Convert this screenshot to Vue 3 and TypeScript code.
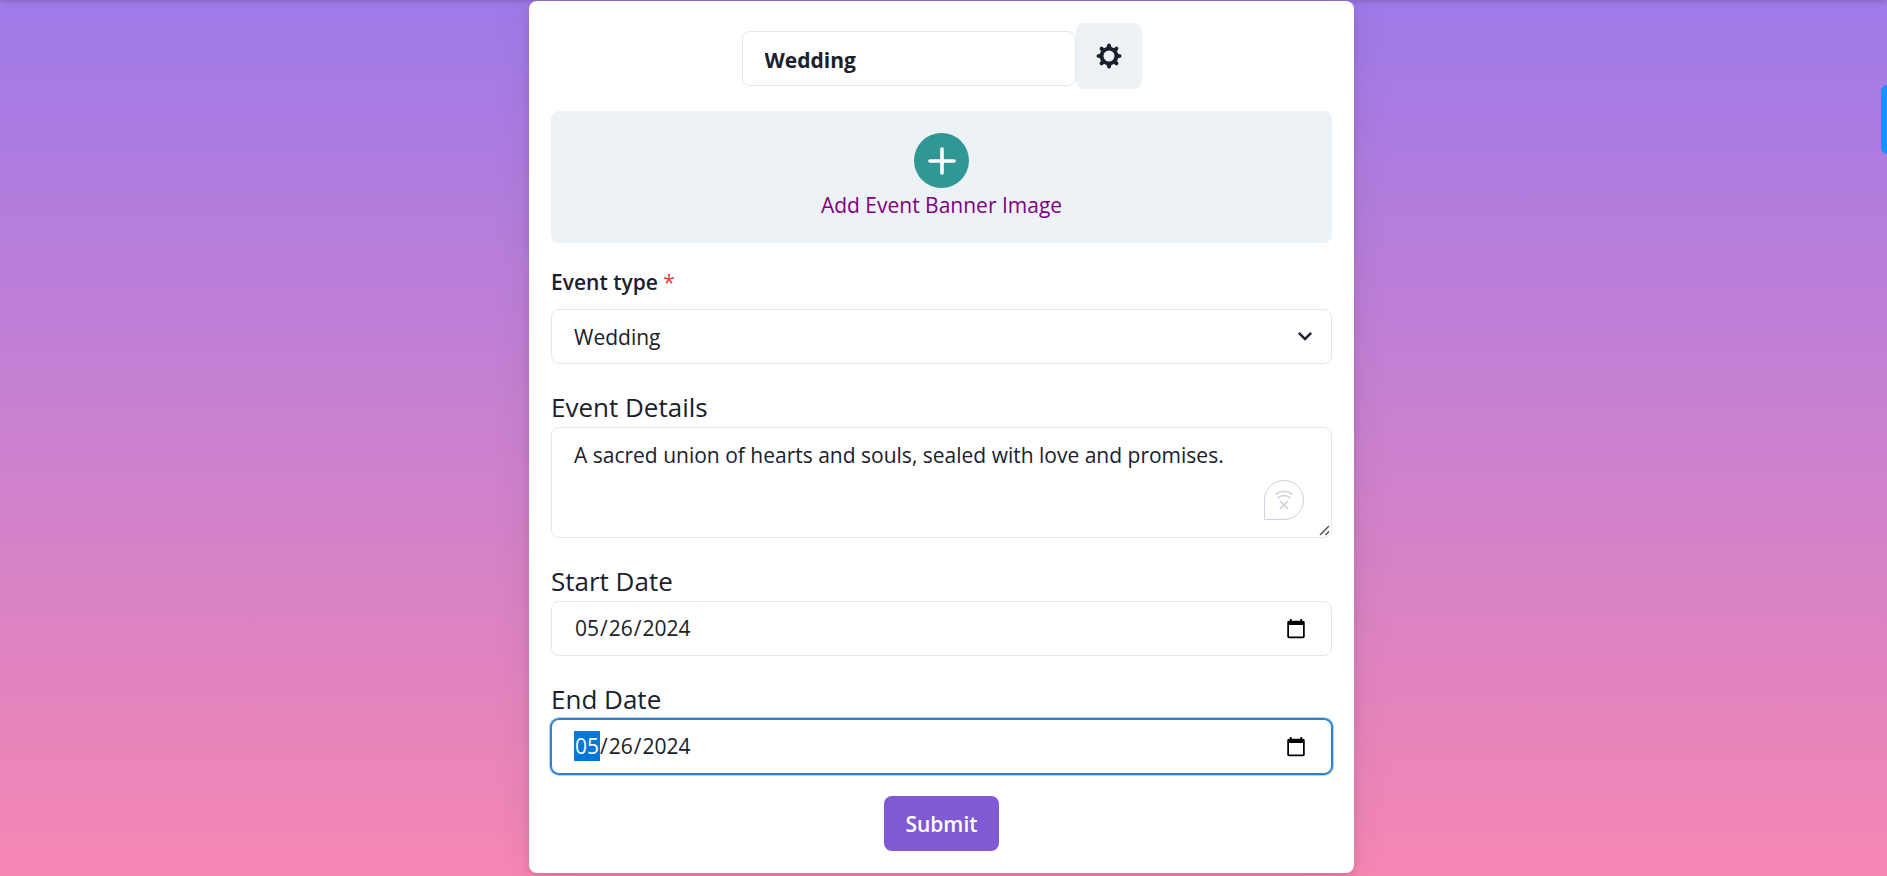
<script setup lang="ts">
import { onMounted, ref } from 'vue'

const title = ref('Wedding')
const eventType = ref('Wedding')
const details = ref('A sacred union of hearts and souls, sealed with love and promises.')
const startDate = ref('2024-05-26')
const endDate = ref('2024-05-26')
const endInput = ref<HTMLInputElement | null>(null)
const eventTypes: string[] = ['Wedding', 'Birthday', 'Conference']

onMounted(() => endInput.value?.focus())
</script>

<template>
  <main class="page">
    <form class="card" @submit.prevent>
      <div class="title-row">
        <input v-model="title" class="field title" type="text" aria-label="Event title" />
        <button class="settings" type="button" aria-label="Settings">
          <svg viewBox="0 0 28 28" width="28" height="28" aria-hidden="true">
            <g fill="currentColor">
              <path v-for="n in 8" :key="n" :transform="`rotate(${n * 45} 14 14)`" d="M10.400 6.500Q12 5.500 12.200 3Q12.300 1.500 14 1.500T15.800 3Q16 5.500 17.600 6.500Z" />
            </g>
            <circle cx="14" cy="14" r="7.400" fill="none" stroke="currentColor" stroke-width="3.800" />
          </svg>
        </button>
      </div>

      <button class="banner" type="button">
        <span class="plus">
          <svg viewBox="0 0 28 28" width="28" height="28" aria-hidden="true">
            <path d="M14 2v24M2 14h24" stroke="currentColor" stroke-width="3.600" stroke-linecap="round" />
          </svg>
        </span>
        <span>Add Event Banner Image</span>
      </button>

      <div class="group spaced">
        <label class="type-label" for="type">Event type <span class="required">*</span></label>
        <div class="select-wrap">
          <select id="type" v-model="eventType" class="field">
            <option v-for="t in eventTypes" :key="t">{{ t }}</option>
          </select>
          <svg class="chevron" viewBox="0 0 24 24" width="28" height="28" aria-hidden="true">
            <path d="M16.59 8.59L12 13.17 7.41 8.59 6 10l6 6 6-6z" fill="currentColor" />
          </svg>
        </div>
      </div>

      <div class="group">
        <label class="label" for="details">Event Details</label>
        <div class="area-wrap">
          <textarea id="details" v-model="details" class="field" spellcheck="false"></textarea>
          <svg class="offline" viewBox="0 0 42 42" width="42" height="42" fill="none" aria-hidden="true">
            <path d="M1.500 40.500V21A19.500 19.500 0 1 1 21 40.500Z" fill="#fff" stroke="#cdd2e0" />
            <g stroke="#d2d2d2" stroke-width="1.700">
              <path d="M12.500 15.500Q21 9 29.500 15.500M14.500 19Q21 14 27.500 19M17 22l8 8M25 22l-8 8" />
            </g>
          </svg>
          <svg class="grip" viewBox="0 0 11 11" width="11" height="11" aria-hidden="true">
            <path d="M1 10l9-9M6.500 10l3.500-3.500" stroke="#4a4a4a" stroke-width="1.400" />
          </svg>
        </div>
      </div>

      <div class="group">
        <label class="label" for="start">Start Date</label>
        <input id="start" v-model="startDate" class="field" type="date" />
      </div>

      <div class="group">
        <label class="label" for="end">End Date</label>
        <input id="end" ref="endInput" v-model="endDate" class="field" type="date" />
      </div>

      <button class="submit" type="submit">Submit</button>
    </form>
    <button class="side-tab" type="button" aria-label="Open side panel"></button>
  </main>
</template>

<style>
body {
  margin: 0;
}

.field:focus::-webkit-datetime-edit-month-field {
  background-image: linear-gradient(#0078d7, #0078d7);
}

.field::-webkit-calendar-picker-indicator {
  width: 22px;
  height: 22px;
}

.field::-webkit-resizer {
  background: transparent;
}
</style>

<style scoped>
.page {
  position: relative;
  box-sizing: border-box;
  min-height: 100vh;
  padding: 1px 20px 3px 16px;
  overflow: hidden;
  background: linear-gradient(to bottom, #9f7aea, #f687b3);
  font-family: 'Segoe UI', 'Open Sans', 'Noto Sans', sans-serif;
  font-size: 21px;
  line-height: 33px;
  color: #1a202c;
}

.page::before {
  content: '';
  position: absolute;
  inset: -10px 0 auto;
  height: 10px;
  box-shadow: 0 1px 6px rgba(0, 0, 0, 0.2);
}

.page *,
.page *::before {
  box-sizing: border-box;
}

button,
input,
select,
textarea {
  margin: 0;
  font: inherit;
  color: inherit;
}

.card {
  position: relative;
  display: flex;
  flex-direction: column;
  gap: 22px;
  max-width: 825px;
  margin: 0 auto;
  padding: 22px;
  border-radius: 8px;
  background: #fff;
  box-shadow: 0 5px 8px rgba(0, 0, 0, 0.1), 0 0 40px rgba(0, 0, 0, 0.08);
}

.title-row {
  display: flex;
  justify-content: center;
  align-items: center;
}

.field {
  display: block;
  width: 100%;
  height: 55px;
  padding: 2px 22px 0;
  border: 1px solid #e2e8f0;
  border-radius: 8px;
  background: #fff;
  outline: none;
}

.title {
  width: 334px;
  margin-top: 5px;
  font-weight: 700;
}

.settings {
  display: grid;
  place-items: center;
  width: 66px;
  height: 66px;
  padding: 0;
  border: 0;
  border-radius: 8px;
  background: #edf2f7;
}

.banner {
  display: flex;
  flex-direction: column;
  align-items: center;
  padding: 22px;
  border: 0;
  border-radius: 8px;
  background: #edf2f7;
  color: purple;
}

.plus {
  display: grid;
  place-items: center;
  width: 55px;
  height: 55px;
  border-radius: 50%;
  background: #319795;
  color: #fff;
}

.plus + span {
  padding-top: 2px;
  line-height: 31px;
}

.group {
  display: flex;
  flex-direction: column;
}

.spaced {
  gap: 11px;
}

.type-label {
  padding-top: 1px;
  line-height: 32px;
  font-weight: 600;
}

.required {
  color: #e53e3e;
  font-weight: 400;
}

.label {
  padding-top: 2px;
  font-size: 26px;
  line-height: 39px;
}

.select-wrap,
.area-wrap {
  position: relative;
}

select.field {
  appearance: none;
}

.chevron {
  position: absolute;
  top: 13px;
  right: 13px;
  pointer-events: none;
}

textarea.field {
  height: 111px;
  padding: 11px 22px;
  line-height: 32px;
  resize: vertical;
}

.offline {
  position: absolute;
  right: 27px;
  bottom: 17px;
}

.grip {
  position: absolute;
  right: 2px;
  bottom: 2px;
  pointer-events: none;
}

input[type='date'] {
  padding-top: 0;
}

input[type='date']:focus {
  border-color: #3182ce;
  box-shadow: 0 0 0 1px #3182ce, 0 0 0 2px #b4d3ec;
}

.submit {
  align-self: center;
  height: 55px;
  padding: 2px 21px 0;
  border: 0;
  border-radius: 8px;
  background: #805ad5;
  color: #fff;
  font-weight: 600;
}

.side-tab {
  position: absolute;
  top: 85px;
  right: 0;
  width: 6px;
  height: 69px;
  padding: 0;
  border: 0;
  border-radius: 6px 0 0 6px;
  background: #1890ff;
}
</style>
